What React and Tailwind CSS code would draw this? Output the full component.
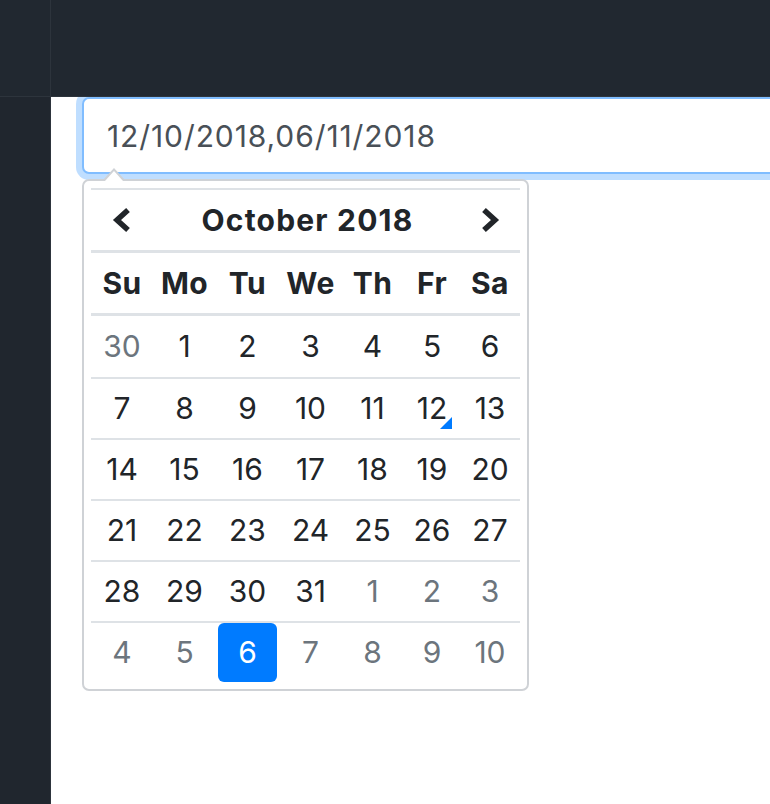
import React from 'react';

const weeks = [
  [[30, true], [1], [2], [3], [4], [5], [6]],
  [[7], [8], [9], [10], [11], [12, false, 'today'], [13]],
  [[14], [15], [16], [17], [18], [19], [20]],
  [[21], [22], [23], [24], [25], [26], [27]],
  [[28], [29], [30], [31], [1, true], [2, true], [3, true]],
  [[4, true], [5, true], [6, true, 'active'], [7, true], [8, true], [9, true], [10, true]],
];

const days = ['Su', 'Mo', 'Tu', 'We', 'Th', 'Fr', 'Sa'];

const cols = 'grid grid-cols-[62px_63px_63px_63px_61px_58px_58px]';

const Chevron = ({ dir }) => (
  <svg width="20" height="26" viewBox="0 0 20 26" fill="none">
    <polyline
      points={dir === 'left' ? '16,3 5,13 16,23' : '4,3 15,13 4,23'}
      stroke="#212529"
      strokeWidth="5.5"
      strokeLinejoin="miter"
    />
  </svg>
);

const DayCell = ({ day, muted, kind }) => {
  if (kind === 'active') {
    return (
      <div className="flex items-center justify-center px-[2px]">
        <div className="w-full h-full flex items-center justify-center rounded-[6px] bg-[#007bff] text-white">
          {day}
        </div>
      </div>
    );
  }
  return (
    <div
      className={`relative flex items-center justify-center ${
        muted ? 'text-[#6c757d]' : 'text-[#212529]'
      }`}
    >
      {day}
      {kind === 'today' && (
        <span className="absolute right-[9px] bottom-[9px] w-0 h-0 border-b-[12px] border-l-[12px] border-b-[#007bff] border-l-transparent" />
      )}
    </div>
  );
};

export default function App() {
  return (
    <div className="w-[770px] h-[804px] bg-white overflow-hidden flex flex-col font-['Inter','Liberation_Sans',sans-serif]">
      <div className="relative z-10 h-[97px] shrink-0 flex bg-[#212830] border-b border-[#2d343c]">
        <div className="w-[51px] border-r border-[#2d343c]" />
        <div className="flex-1" />
      </div>

      <div className="flex flex-1">
        <div className="w-[51px] shrink-0 bg-[#20262e] border-r border-[#2d343c]" />

        <div className="flex-1 pl-[31px]">
          <div className="w-[720px] h-[77px] flex items-center pl-[23px] pt-[1px] bg-white border-2 border-[#80bdff] rounded-[7px] shadow-[0_0_0_6px_rgba(0,123,255,0.25)] text-[30px] text-[#495057] tracking-[0.9px]">
            12/10/2018,06/11/2018
          </div>

          <div className="relative z-20 mt-[5px] w-[447px] bg-white border-2 border-[#cfd2d6] rounded-[7px] p-[7px]">
            <span className="absolute left-[19px] top-[-13px] w-0 h-0 border-l-[11px] border-r-[11px] border-b-[12px] border-l-transparent border-r-transparent border-b-[#cfd2d6]" />
            <span className="absolute left-[21px] top-[-10px] w-0 h-0 border-l-[9px] border-r-[9px] border-b-[10px] border-l-transparent border-r-transparent border-b-white" />

            <div className="text-[30px] text-[#212529]">
              <div className={`${cols} h-[62px] border-t-2 border-[#dee2e6]`}>
                <div className="flex items-center justify-center">
                  <Chevron dir="left" />
                </div>
                <div className="col-span-5 flex items-center justify-center font-bold tracking-[1.2px] pl-[1px]">
                  October 2018
                </div>
                <div className="flex items-center justify-center">
                  <Chevron dir="right" />
                </div>
              </div>

              <div className={`${cols} h-[63px] border-t-[3px] border-[#dee2e6]`}>
                {days.map((d) => (
                  <div key={d} className="flex items-center justify-center font-bold tracking-[0.4px]">
                    {d}
                  </div>
                ))}
              </div>

              {weeks.map((week, i) => (
                <div
                  key={i}
                  className={`${cols} ${
                    i === 0 ? 'h-[64px] border-t-[3px]' : 'h-[61px] border-t-2'
                  } border-[#dee2e6]`}
                >
                  {week.map(([day, muted, kind], j) => (
                    <DayCell key={j} day={day} muted={muted} kind={kind} />
                  ))}
                </div>
              ))}
            </div>
          </div>
        </div>
      </div>
    </div>
  );
}
